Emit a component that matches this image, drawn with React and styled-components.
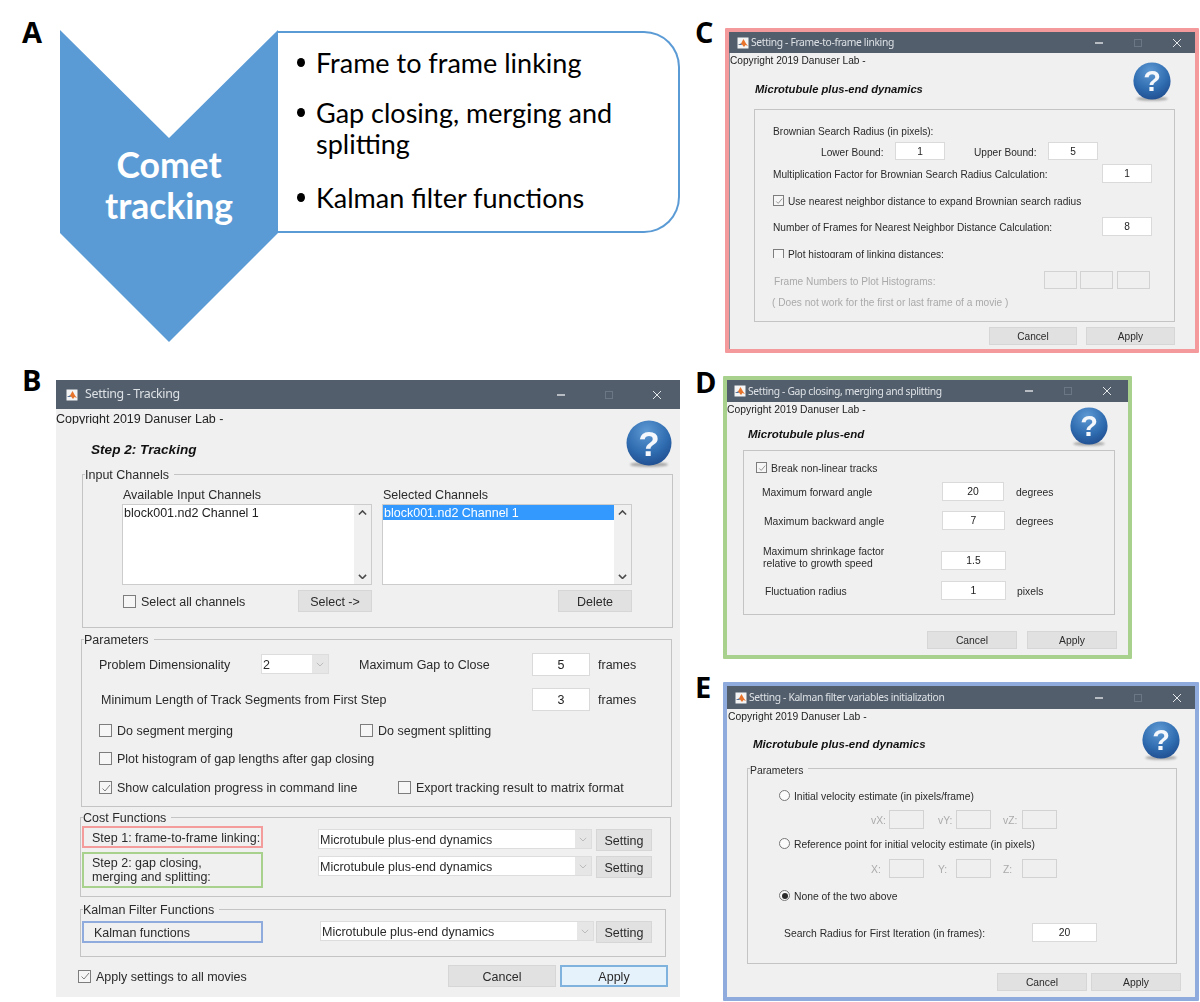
import React from "react";
import styled, { createGlobalStyle } from "styled-components";

const Global = createGlobalStyle`
  html, body { margin: 0; padding: 0; background: #fff; }
  * { box-sizing: border-box; }
`;

const Page = styled.div`
  width: 1200px;
  height: 1002px;
  overflow: hidden;
  display: flex;
  background: #fff;
  font-family: "Liberation Sans", Arial, sans-serif;
  font-variant-ligatures: none;
`;
const LeftCol = styled.div`
  width: 690px;
  flex: none;
`;
const RightCol = styled.div`
  width: 510px;
  flex: none;
`;
const Panel = styled.div`
  display: flex;
  align-items: flex-start;
  height: ${(p) => (p.$h ? `${p.$h}px` : "auto")};
  padding-left: ${(p) => p.$pl}px;
`;
const PanelLabel = styled.div`
  flex: none;
  width: ${(p) => p.$w}px;
  margin-top: ${(p) => p.$mt}px;
  font: 700 29px/29px "Open Sans", sans-serif;
  color: #000;
`;
const ChevronWrap = styled.div`
  position: relative;
  flex: none;
  width: 218px;
  height: 312px;
  margin-top: 30px;
`;
const ChevronText = styled.div`
  position: absolute;
  left: 0;
  right: 0;
  top: 114px;
  text-align: center;
  color: #fff;
  font: 700 35.5px/41px Lato, sans-serif;
`;
const BulletCard = styled.ul`
  flex: none;
  width: 402px;
  height: 202px;
  margin: 31px 0 0;
  padding: 14px 0 0 19px;
  list-style: none;
  background: #fff;
  border: 2px solid #5b9bd5;
  border-left: 0;
  border-radius: 0 36px 36px 0;
  color: #000;
  font: 400 27px/31px Lato, sans-serif;
`;
const BulletItem = styled.li`
  display: flex;
  align-items: flex-start;
  margin-top: ${(p) => p.$mt || 0}px;
`;
const BulletDot = styled.span`
  flex: none;
  width: 8px;
  height: 9px;
  margin: 11px 11px 0 0;
  border-radius: 50%;
  background: #000;
`;

const DialogFrame = styled.div`
  flex: none;
  width: ${(p) => p.$w}px;
  margin-top: ${(p) => p.$mt}px;
  border: 4px solid ${(p) => p.$c};
  border-radius: 1px;
`;
const Dialog = styled.div`
  --n: ${(p) => p.$n}px;
  flex: none;
  width: ${(p) => (p.$w ? `${p.$w}px` : "auto")};
  margin-top: ${(p) => p.$mt || 0}px;
  padding-bottom: ${(p) => p.$pb}px;
  background: #f0f0f0;
  color: #2a2a2a;
  font-size: ${(p) => p.$fs}px;
  line-height: 1.2;
  filter: blur(0.35px);
  box-shadow: ${(p) => (p.$edge ? "inset 1px 0 0 #8d949c" : "none")};
`;
const TitleBar = styled.div`
  display: flex;
  align-items: center;
  height: ${(p) => p.$h}px;
  padding-left: ${(p) => p.$pl}px;
  background: #525e6c;
`;
const TitleText = styled.div`
  flex: 1;
  margin-left: ${(p) => p.$ml}px;
  color: #dde1e5;
  font: 400 ${(p) => p.$fs}px/1 "Noto Sans", sans-serif;
  letter-spacing: ${(p) => p.$ls}px;
  white-space: nowrap;
`;
const Controls = styled.div`
  display: flex;
  align-items: center;
  gap: ${(p) => p.$gap}px;
  padding-right: ${(p) => p.$pr}px;
`;
const Copyright = styled.div`
  height: ${(p) => p.$h}px;
  overflow: hidden;
  padding-left: ${(p) => p.$pl || 0}px;
  line-height: ${(p) => p.$lh}px;
  color: #222;
  white-space: nowrap;
`;
const HeaderRow = styled.div`
  display: flex;
  justify-content: space-between;
  align-items: center;
  height: ${(p) => p.$h}px;
  padding: 0 ${(p) => p.$pr}px 0 ${(p) => p.$pl}px;
`;
const DialogHeading = styled.div`
  padding-top: ${(p) => p.$pt || 0}px;
  font-weight: 700;
  font-style: italic;
  font-size: ${(p) => p.$fs}px;
  color: #111;
  white-space: nowrap;
`;
const HelpSlot = styled.div`
  flex: none;
  align-self: flex-start;
  margin-top: ${(p) => p.$mt}px;
  height: ${(p) => p.$d}px;
`;
const Group = styled.div`
  position: relative;
  width: ${(p) => p.$w}px;
  height: ${(p) => p.$h}px;
  margin-left: ${(p) => p.$ml}px;
  margin-top: ${(p) => p.$mt || 0}px;
  border: 1px solid #c4c4c4;
`;
const Legend = styled.div`
  position: absolute;
  left: 2px;
  top: calc(-8px + var(--n));
  padding-right: 5px;
  background: #f0f0f0;
  line-height: 15px;
  white-space: nowrap;
`;
const Row = styled.div`
  display: flex;
  align-items: ${(p) => p.$align || "center"};
  height: ${(p) => p.$h}px;
  margin-top: ${(p) => p.$mt || 0}px;
  padding-left: ${(p) => p.$pl || 0}px;
  overflow: ${(p) => (p.$clip ? "hidden" : "visible")};
`;
const Txt = styled.div`
  flex: none;
  width: ${(p) => (p.$w ? `${p.$w}px` : "auto")};
  margin-left: ${(p) => p.$ml || 0}px;
  padding-top: ${(p) => (p.$lh ? "0" : "calc(var(--n) * 2)")};
  color: ${(p) => (p.$off ? "#aaaaaa" : "#2a2a2a")};
  line-height: ${(p) => (p.$lh ? `${p.$lh}px` : "inherit")};
  white-space: nowrap;
`;
const Field = styled.div`
  flex: none;
  display: flex;
  align-items: center;
  justify-content: center;
  width: ${(p) => p.$w}px;
  height: ${(p) => p.$h || 19}px;
  margin-left: ${(p) => p.$ml || 0}px;
  padding-top: 2px;
  background: ${(p) => (p.$off ? "#efefef" : "#fff")};
  border: 1px solid ${(p) => (p.$off ? "#d2d2d2" : "#dadada")};
  color: #222;
`;
const Btn = styled.div`
  flex: none;
  display: flex;
  align-items: center;
  justify-content: center;
  width: ${(p) => p.$w}px;
  height: ${(p) => p.$h}px;
  margin-left: ${(p) => p.$ml || 0}px;
  margin-top: ${(p) => p.$mt || 0}px;
  padding-top: 2px;
  background: ${(p) => (p.$primary ? "#e5f1fb" : "#e1e1e1")};
  border: ${(p) => (p.$primary ? "2px solid #7fb2dc" : "1px solid #d6d6d6")};
  color: #2a2a2a;
`;
const OutlineBox = styled.div`
  flex: none;
  display: flex;
  align-items: center;
  width: 181px;
  height: ${(p) => p.$h}px;
  padding-left: ${(p) => p.$pl}px;
  padding-top: ${(p) => p.$pt || 0}px;
  border: 2px solid ${(p) => p.$c};
  line-height: 14px;
  white-space: nowrap;
`;
const Combo = styled.div`
  flex: none;
  display: flex;
  align-items: center;
  width: ${(p) => p.$w}px;
  height: ${(p) => p.$h}px;
  margin-left: ${(p) => p.$ml || 0}px;
  margin-top: ${(p) => p.$mt || 0}px;
  background: #fff;
  border: 1px solid #dddddd;
  padding-left: 1px;
`;
const ComboText = styled.div`
  flex: 1;
  padding-top: 2px;
  white-space: nowrap;
  overflow: hidden;
`;
const ComboArrow = styled.div`
  flex: none;
  display: flex;
  align-items: center;
  justify-content: center;
  width: 16px;
  height: 100%;
  background: #e6e6e6;
`;
const ListBox = styled.div`
  flex: none;
  display: flex;
  width: 250px;
  height: 81px;
  margin-left: ${(p) => p.$ml || 0}px;
  background: #fff;
  border: 1px solid #cccccc;
`;
const ListBody = styled.div`
  flex: 1;
  min-width: 0;
`;
const ListItem = styled.div`
  height: 15px;
  line-height: 17px;
  padding-left: 1px;
  background: ${(p) => (p.$sel ? "#3399ff" : "transparent")};
  color: ${(p) => (p.$sel ? "#fff" : "#222")};
  white-space: nowrap;
`;
const ScrollTrack = styled.div`
  flex: none;
  display: flex;
  flex-direction: column;
  justify-content: space-between;
  align-items: center;
  width: 17px;
  padding: 5px 0;
  background: #f0f0f0;
`;
const TickBox = styled.div`
  flex: none;
  display: flex;
  align-items: center;
  justify-content: center;
  width: ${(p) => p.$s}px;
  height: ${(p) => p.$s}px;
  background: #f6f6f6;
  border: 1px solid #7d7d7d;
`;
const TickItem = styled.div`
  flex: none;
  display: flex;
  align-items: ${(p) => (p.$top ? "flex-start" : "center")};
  gap: ${(p) => p.$gap}px;
  width: ${(p) => (p.$w ? `${p.$w}px` : "auto")};
  white-space: nowrap;
`;
const TickText = styled.span`
  padding-top: ${(p) => (p.$top ? "0" : "calc(var(--n) * 2)")};
  line-height: ${(p) => (p.$top ? "12px" : "inherit")};
`;
const RadioDot = styled.div`
  flex: none;
  display: flex;
  align-items: center;
  justify-content: center;
  width: 11px;
  height: 11px;
  border-radius: 50%;
  background: #fbfbfb;
  border: 1px solid #777;
  &::after {
    content: "";
    display: ${(p) => (p.$on ? "block" : "none")};
    width: 6px;
    height: 6px;
    border-radius: 50%;
    background: #2c2c2c;
  }
`;

const Chev = ({ up, color = "#4a4a4a", w = 9, sw = 1.7 }) => (
  <svg width={w} height={w * 0.6} viewBox="0 0 10 6" fill="none">
    <path d={up ? "M1 5l4-4 4 4" : "M1 1l4 4 4-4"} stroke={color} strokeWidth={sw} />
  </svg>
);

const Matlab = () => (
  <svg width="12" height="12" viewBox="0 0 12 12">
    <rect x="0.5" y="0.5" width="11" height="11" fill="#f4f4f4" />
    <path d="M1 8l3-1.5L6.5 2 9 6.5 11 9 8.5 8 7 10 5 7.5 3 8z" fill="#e8732a" />
    <path d="M1 8l3-1.5 1 1L3 8z" fill="#2f6fb0" />
  </svg>
);

const WinButtons = ({ gap, pr }) => (
  <Controls $gap={gap} $pr={pr}>
    <svg width="10" height="10" viewBox="0 0 10 10">
      <path d="M1 5h8" stroke="#e4e7ea" strokeWidth="1.4" />
    </svg>
    <svg width="10" height="10" viewBox="0 0 10 10" fill="none">
      <rect x="1.5" y="1.5" width="7" height="7" stroke="#6c7785" />
    </svg>
    <svg width="10" height="10" viewBox="0 0 10 10">
      <path d="M1 1l8 8M9 1l-8 8" stroke="#e4e7ea" strokeWidth="1" />
    </svg>
  </Controls>
);

const Help = ({ d, id }) => (
  <svg width={d} height={d} viewBox="0 0 46 46" style={{ overflow: "visible", display: "block" }}>
    <defs>
      <radialGradient id={id} cx="45%" cy="25%" r="80%">
        <stop offset="0%" stopColor="#5f9ad4" />
        <stop offset="60%" stopColor="#2f6cb0" />
        <stop offset="100%" stopColor="#1f4c8e" />
      </radialGradient>
      <filter id={`${id}s`} x="-30%" y="-100%" width="160%" height="300%">
        <feGaussianBlur stdDeviation="1.2" />
      </filter>
    </defs>
    <ellipse cx="23" cy="44.5" rx="19" ry="2.5" fill="#a8a8a8" filter={`url(#${id}s)`} />
    <circle cx="23" cy="23" r="22.5" fill={`url(#${id})`} />
    <text x="23" y="35.5" textAnchor="middle" fill="#f4f7fb" fontFamily="Liberation Sans, sans-serif" fontWeight="700" fontSize="35">?</text>
  </svg>
);

const Tick = ({ on, s = 13, gap = 5, w, top, children }) => (
  <TickItem $gap={gap} $w={w} $top={top}>
    <TickBox $s={s}>
      {on && (
        <svg width={s - 3} height={s - 3} viewBox="0 0 10 10" fill="none">
          <path d="M1.5 5.5l2.5 2.5 5-6" stroke="#808080" strokeWidth="1" />
        </svg>
      )}
    </TickBox>
    <TickText $top={top}>{children}</TickText>
  </TickItem>
);

const Radio = ({ on, children }) => (
  <TickItem $gap={4}>
    <RadioDot $on={on} />
    <TickText>{children}</TickText>
  </TickItem>
);

const Select = ({ w, h, ml, mt, children }) => (
  <Combo $w={w} $h={h} $ml={ml} $mt={mt}>
    <ComboText>{children}</ComboText>
    <ComboArrow>
      <Chev color="#b0b0b0" w={8} sw={1} />
    </ComboArrow>
  </Combo>
);

const Scroll = () => (
  <ScrollTrack>
    <Chev up />
    <Chev />
  </ScrollTrack>
);

const MT = "Microtubule plus-end dynamics";
const COPY = "Copyright 2019 Danuser Lab -";

const PanelA = () => (
  <Panel $h={365} $pl={22}>
    <PanelLabel $w={38} $mt={17}>A</PanelLabel>
    <ChevronWrap>
      <svg width="218" height="312" viewBox="0 0 218 312" style={{ display: "block" }}>
        <path d="M0 0L109 108 L218 0V203L109 312L0 203Z" fill="#5b9bd5" />
      </svg>
      <ChevronText>Comet<br />tracking</ChevronText>
    </ChevronWrap>
    <BulletCard>
      <BulletItem><BulletDot /><span>Frame to frame linking</span></BulletItem>
      <BulletItem $mt={19}><BulletDot /><span>Gap closing, merging and<br />splitting</span></BulletItem>
      <BulletItem $mt={23}><BulletDot /><span>Kalman filter functions</span></BulletItem>
    </BulletCard>
  </Panel>
);

const PanelB = () => (
  <Panel $pl={22}>
    <PanelLabel $w={34} $mt={0}>B</PanelLabel>
    <Dialog $w={624} $mt={15} $pb={10} $fs={12.5} $n={1}>
      <TitleBar $h={29} $pl={10}>
        <Matlab />
        <TitleText $ml={7} $fs={12.4} $ls={-0.33}>Setting - Tracking</TitleText>
        <WinButtons gap={38} pr={18} />
      </TitleBar>
      <Copyright $h={15} $lh={20}>{COPY}</Copyright>
      <HeaderRow $h={50} $pl={35} $pr={8}>
        <DialogHeading $fs={13.6} $pt={2}>Step 2: Tracking</DialogHeading>
        <HelpSlot $mt={-4} $d={46}><Help d={46} id="hb" /></HelpSlot>
      </HeaderRow>

      <Group $ml={26} $w={591} $h={154}>
        <Legend>Input Channels</Legend>
        <Row $mt={12} $h={14} $pl={40}>
          <Txt $w={260}>Available Input Channels</Txt>
          <Txt>Selected Channels</Txt>
        </Row>
        <Row $mt={3} $h={81} $pl={39}>
          <ListBox>
            <ListBody><ListItem>block001.nd2 Channel 1</ListItem></ListBody>
            <Scroll />
          </ListBox>
          <ListBox $ml={10}>
            <ListBody><ListItem $sel>block001.nd2 Channel 1</ListItem></ListBody>
            <Scroll />
          </ListBox>
        </Row>
        <Row $mt={5} $h={22} $pl={40}>
          <Tick w={175}>Select all channels</Tick>
          <Btn $w={74} $h={22}>Select -&gt;</Btn>
          <Btn $w={74} $h={22} $ml={186}>Delete</Btn>
        </Row>
      </Group>

      <Group $ml={25} $mt={11} $w={591} $h={168}>
        <Legend>Parameters</Legend>
        <Row $mt={12} $h={24} $pl={17}>
          <Txt $w={162}>Problem Dimensionality</Txt>
          <Select w={68} h={20}>2</Select>
          <Txt $w={173} $ml={30}>Maximum Gap to Close</Txt>
          <Field $w={58} $h={23}>5</Field>
          <Txt $ml={8}>frames</Txt>
        </Row>
        <Row $mt={12} $h={23} $pl={19}>
          <Txt $w={431}>Minimum Length of Track Segments from First Step</Txt>
          <Field $w={58} $h={23}>3</Field>
          <Txt $ml={8}>frames</Txt>
        </Row>
        <Row $mt={13} $h={13} $pl={17}>
          <Tick w={261}>Do segment merging</Tick>
          <Tick>Do segment splitting</Tick>
        </Row>
        <Row $mt={15} $h={13} $pl={17}>
          <Tick>Plot histogram of gap lengths after gap closing</Tick>
        </Row>
        <Row $mt={15} $h={15} $pl={17}>
          <Tick on w={299}>Show calculation progress in command line</Tick>
          <Tick>Export tracking result to matrix format</Tick>
        </Row>
      </Group>

      <Group $ml={24} $mt={10} $w={591} $h={80}>
        <Legend>Cost Functions</Legend>
        <Row $mt={8} $h={22} $pl={1} $align="flex-start">
          <OutlineBox $h={22} $pl={8} $pt={1} $c="#f49b9b">Step 1: frame-to-frame linking:</OutlineBox>
          <Select w={274} h={20} ml={55} mt={3}>{MT}</Select>
          <Btn $w={56} $h={22} $ml={4} $mt={3}>Setting</Btn>
        </Row>
        <Row $mt={4} $h={36} $pl={1} $align="flex-start">
          <OutlineBox $h={36} $pl={8} $c="#a9d18e">Step 2: gap closing,<br />merging and splitting:</OutlineBox>
          <Select w={274} h={20} ml={55} mt={4}>{MT}</Select>
          <Btn $w={56} $h={22} $ml={4} $mt={4}>Setting</Btn>
        </Row>
      </Group>

      <Group $ml={24} $mt={12} $w={586} $h={48}>
        <Legend>Kalman Filter Functions</Legend>
        <Row $mt={11} $h={22} $pl={1} $align="flex-start">
          <OutlineBox $h={22} $pl={10} $pt={1} $c="#8faadc">Kalman functions</OutlineBox>
          <Select w={274} h={20} ml={57}>{MT}</Select>
          <Btn $w={56} $h={22} $ml={2}>Setting</Btn>
        </Row>
      </Group>

      <Row $mt={8} $h={22} $pl={22}>
        <Tick on w={370}>Apply settings to all movies</Tick>
        <Btn $w={108} $h={22}>Cancel</Btn>
        <Btn $w={108} $h={22} $ml={4} $primary>Apply</Btn>
      </Row>
    </Dialog>
  </Panel>
);

const PanelC = () => (
  <Panel $h={353} $pl={5}>
    <PanelLabel $w={30} $mt={17}>C</PanelLabel>
    <DialogFrame $w={474} $mt={28} $c="#f59a9c">
      <Dialog $pb={4} $fs={10.15} $n={2} $edge>
        <TitleBar $h={21} $pl={8}>
          <Matlab />
          <TitleText $ml={2} $fs={10.3} $ls={-0.35}>Setting - Frame-to-frame linking</TitleText>
          <WinButtons gap={29} pr={13} />
        </TitleBar>
        <Copyright $h={14} $lh={16} $pl={1}>{COPY}</Copyright>
        <HeaderRow $h={42} $pl={26} $pr={24}>
          <DialogHeading $fs={11.2} $pt={3}>{MT}</DialogHeading>
          <HelpSlot $mt={-5} $d={38}><Help d={38} id="hc" /></HelpSlot>
        </HeaderRow>
        <Group $ml={25} $w={421} $h={213}>
          <Row $mt={13} $h={14} $pl={18}><Txt>Brownian Search Radius (in pixels):</Txt></Row>
          <Row $mt={5} $h={18} $pl={66}>
            <Txt $w={74}>Lower Bound:</Txt>
            <Field $w={50} $h={18}>1</Field>
            <Txt $w={74} $ml={29}>Upper Bound:</Txt>
            <Field $w={50} $h={18}>5</Field>
          </Row>
          <Row $mt={4} $h={19} $pl={18}>
            <Txt $w={329}>Multiplication Factor for Brownian Search Radius Calculation:</Txt>
            <Field $w={50}>1</Field>
          </Row>
          <Row $mt={12} $h={11} $pl={18}>
            <Tick on s={11} gap={4}>Use nearest neighbor distance to expand Brownian search radius</Tick>
          </Row>
          <Row $mt={11} $h={19} $pl={18}>
            <Txt $w={329}>Number of Frames for Nearest Neighbor Distance Calculation:</Txt>
            <Field $w={50}>8</Field>
          </Row>
          <Row $mt={13} $h={9} $pl={18} $align="flex-start" $clip>
            <Tick s={11} gap={4} top>Plot histogram of linking distances:</Tick>
          </Row>
          <Row $mt={13} $h={18} $pl={19}>
            <Txt $w={270} $off>Frame Numbers to Plot Histograms:</Txt>
            <Field $w={33} $h={18} $off />
            <Field $w={33} $h={18} $ml={3} $off />
            <Field $w={33} $h={18} $ml={4} $off />
          </Row>
          <Row $mt={5} $h={14} $pl={17}>
            <Txt $off>( Does not work for the first or last frame of a movie )</Txt>
          </Row>
        </Group>
        <Row $mt={5} $h={18} $pl={260}>
          <Btn $w={88} $h={18}>Cancel</Btn>
          <Btn $w={89} $h={18} $ml={9}>Apply</Btn>
        </Row>
      </Dialog>
    </DialogFrame>
  </Panel>
);

const PanelD = () => (
  <Panel $h={306} $pl={5}>
    <PanelLabel $w={28} $mt={14}>D</PanelLabel>
    <DialogFrame $w={409} $mt={23} $c="#a9d18e">
      <Dialog $pb={6} $fs={10.35} $n={2}>
        <TitleBar $h={22} $pl={7}>
          <Matlab />
          <TitleText $ml={2} $fs={10.3} $ls={-0.35}>Setting - Gap closing, merging and splitting</TitleText>
          <WinButtons gap={29} pr={16} />
        </TitleBar>
        <Copyright $h={16} $lh={16}>{COPY}</Copyright>
        <HeaderRow $h={32} $pl={21} $pr={20}>
          <DialogHeading $fs={11.5} $pt={1}>Microtubule plus-end</DialogHeading>
          <HelpSlot $mt={-11} $d={38}><Help d={38} id="hd" /></HelpSlot>
        </HeaderRow>
        <Group $ml={16} $w={372} $h={165}>
          <Row $mt={11} $h={11} $pl={12}>
            <Tick on s={11} gap={4}>Break non-linear tracks</Tick>
          </Row>
          <Row $mt={9} $h={19} $pl={18}>
            <Txt $w={180}>Maximum forward angle</Txt>
            <Field $w={62}>20</Field>
            <Txt $ml={12}>degrees</Txt>
          </Row>
          <Row $mt={10} $h={19} $pl={20}>
            <Txt $w={178}>Maximum backward angle</Txt>
            <Field $w={63}>7</Field>
            <Txt $ml={11}>degrees</Txt>
          </Row>
          <Row $mt={15} $h={25} $pl={19} $align="flex-end">
            <Txt $w={178} $lh={12}>Maximum shrinkage factor<br />relative to growth speed</Txt>
            <Field $w={65}>1.5</Field>
          </Row>
          <Row $mt={11} $h={19} $pl={21}>
            <Txt $w={176}>Fluctuation radius</Txt>
            <Field $w={65}>1</Field>
            <Txt $ml={11}>pixels</Txt>
          </Row>
        </Group>
        <Row $mt={16} $h={18} $pl={200}>
          <Btn $w={90} $h={18}>Cancel</Btn>
          <Btn $w={90} $h={18} $ml={10}>Apply</Btn>
        </Row>
      </Dialog>
    </DialogFrame>
  </Panel>
);

const PanelE = () => (
  <Panel $pl={5}>
    <PanelLabel $w={28} $mt={13}>E</PanelLabel>
    <DialogFrame $w={476} $mt={23} $c="#8faadc">
      <Dialog $pb={6} $fs={10.35} $n={2}>
        <TitleBar $h={23} $pl={8}>
          <Matlab />
          <TitleText $ml={2} $fs={10.3} $ls={-0.35}>Setting - Kalman filter variables initialization</TitleText>
          <WinButtons gap={29} pr={13} />
        </TitleBar>
        <Copyright $h={13} $lh={16} $pl={1}>{COPY}</Copyright>
        <HeaderRow $h={46} $pl={26} $pr={15}>
          <DialogHeading $fs={11.5}>{MT}</DialogHeading>
          <HelpSlot $mt={-1} $d={38}><Help d={38} id="he" /></HelpSlot>
        </HeaderRow>
        <Group $ml={20} $w={430} $h={196}>
          <Legend>Parameters</Legend>
          <Row $mt={21} $h={11} $pl={31}><Radio>Initial velocity estimate (in pixels/frame)</Radio></Row>
          <Row $mt={9} $h={19} $pl={123}>
            <Txt $w={18} $off>vX:</Txt>
            <Field $w={35} $off />
            <Txt $w={18} $ml={14} $off>vY:</Txt>
            <Field $w={35} $off />
            <Txt $w={19} $ml={12} $off>vZ:</Txt>
            <Field $w={35} $off />
          </Row>
          <Row $mt={9} $h={11} $pl={31}><Radio>Reference point for initial velocity estimate (in pixels)</Radio></Row>
          <Row $mt={10} $h={19} $pl={123}>
            <Txt $w={18} $off>X:</Txt>
            <Field $w={35} $off />
            <Txt $w={18} $ml={14} $off>Y:</Txt>
            <Field $w={35} $off />
            <Txt $w={19} $ml={12} $off>Z:</Txt>
            <Field $w={35} $off />
          </Row>
          <Row $mt={12} $h={11} $pl={31}><Radio on>None of the two above</Radio></Row>
          <Row $mt={22} $h={19} $pl={36}>
            <Txt $w={248}>Search Radius for First Iteration (in frames):</Txt>
            <Field $w={65}>20</Field>
          </Row>
        </Group>
        <Row $mt={9} $h={18} $pl={270}>
          <Btn $w={90} $h={18}>Cancel</Btn>
          <Btn $w={90} $h={18} $ml={4}>Apply</Btn>
        </Row>
      </Dialog>
    </DialogFrame>
  </Panel>
);

export default function App() {
  return (
    <Page>
      <Global />
      <LeftCol>
        <PanelA />
        <PanelB />
      </LeftCol>
      <RightCol>
        <PanelC />
        <PanelD />
        <PanelE />
      </RightCol>
    </Page>
  );
}
